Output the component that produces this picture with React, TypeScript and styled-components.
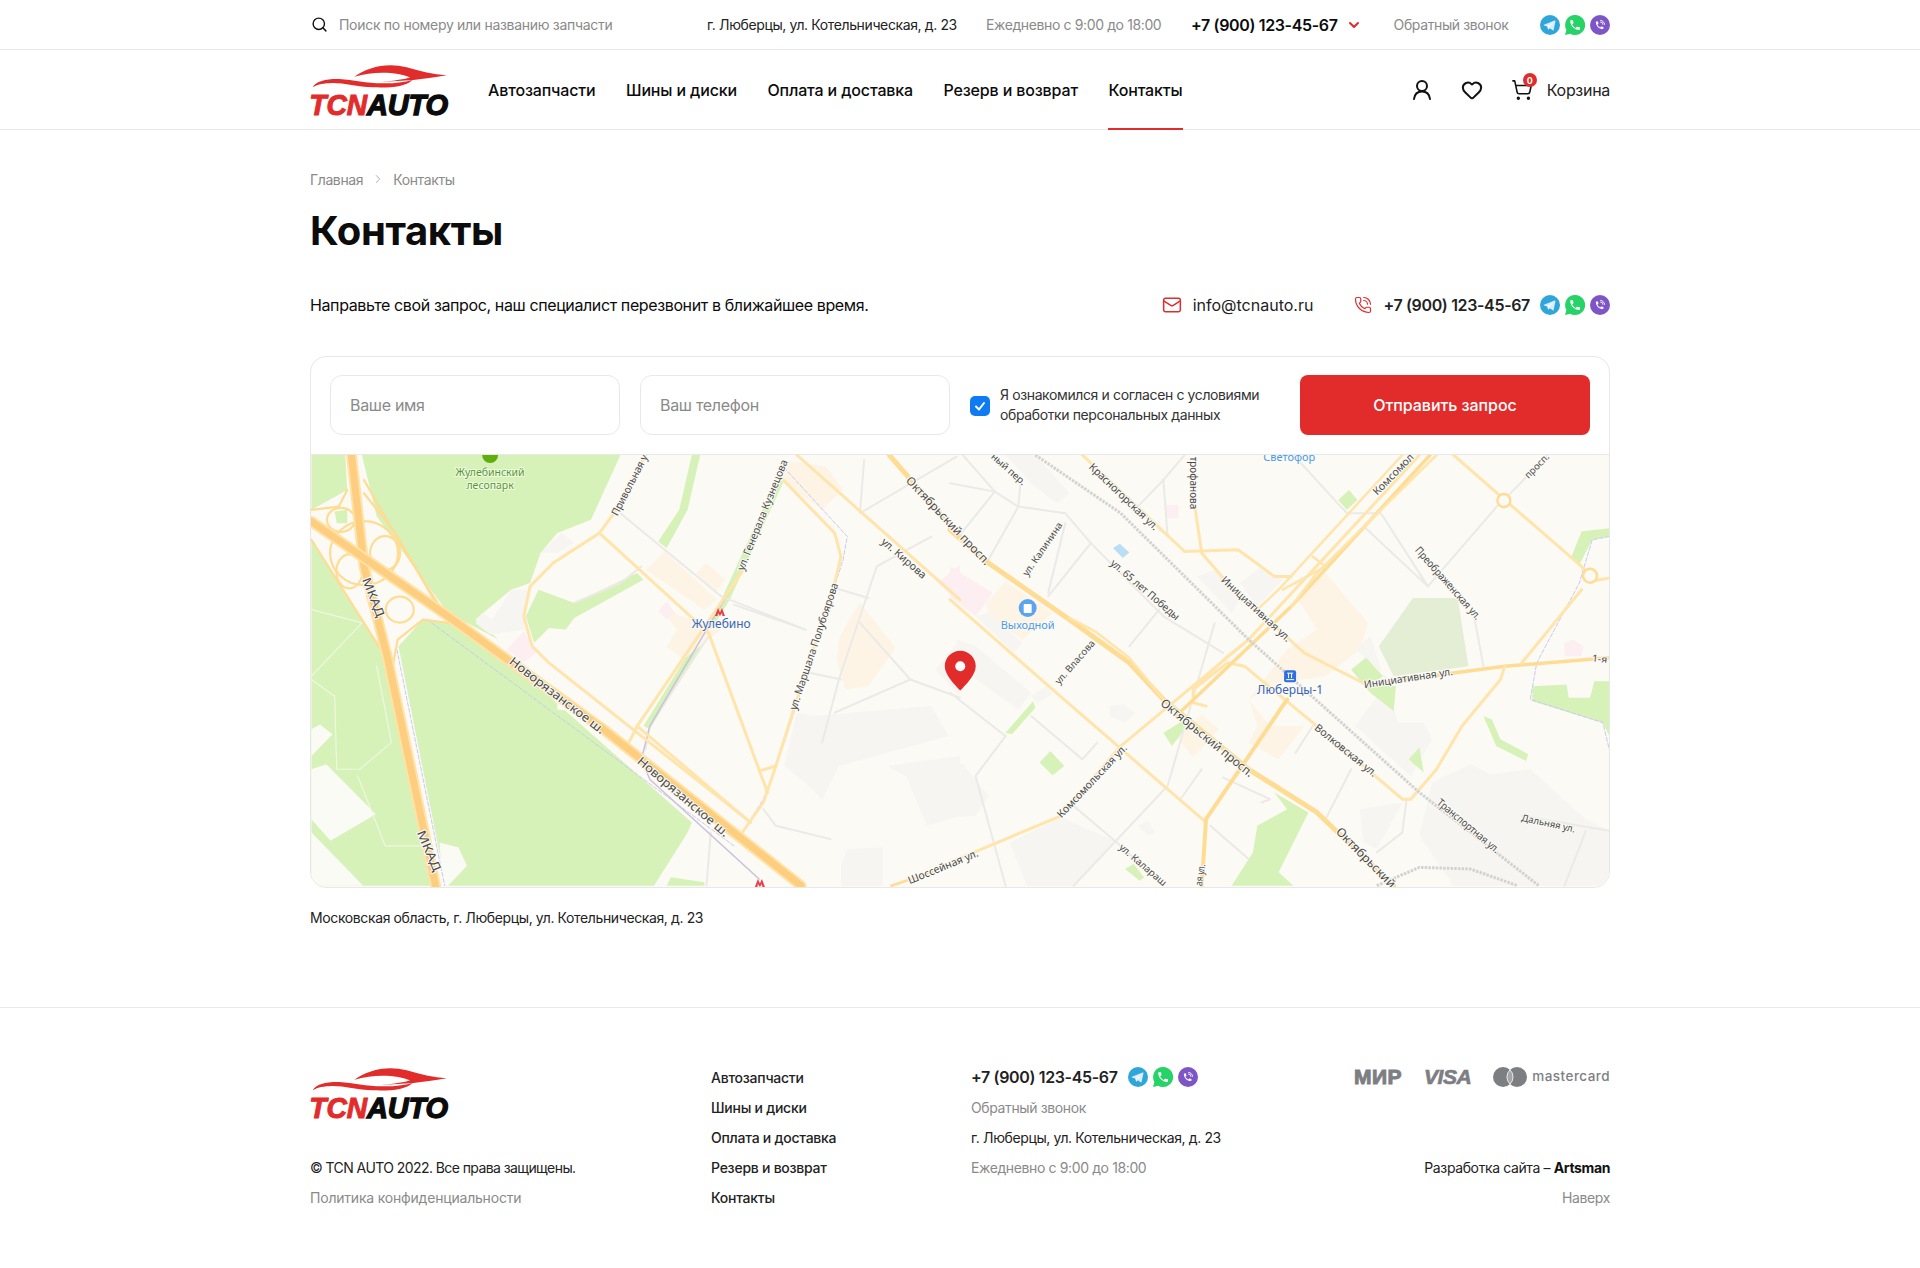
import React from 'react';
import styled, { createGlobalStyle } from 'styled-components';
import { Search, Heart, ShoppingCart, ChevronDown, ChevronRight, Mail, PhoneCall } from 'lucide-react';

const Global = createGlobalStyle`
  html, body { margin: 0; padding: 0; background: #fff; }
  body { font-family: Inter, "Noto Sans", sans-serif; color: #0c0c0c; letter-spacing: -0.38px; }
  * { box-sizing: border-box; }
`;

const Page = styled.div`width: 1920px; height: 1268px; overflow: hidden; display: flex; flex-direction: column;`;
const Container = styled.div`width: 1300px; margin: 0 auto;`;

const TopBarWrap = styled.div`height: 50px; border-bottom: 1px solid #e9e9e9;`;
const TopBarRow = styled(Container)`height: 49px; display: flex; align-items: center; font-size: 14px;`;
const SearchBox = styled.div`width: 397px; display: flex; align-items: center; gap: 11px; color: #8a8a8a; letter-spacing: -0.3px; svg { color: #111; margin-left: 1px; }`;
const Address = styled.span`width: 279px; color: #222;`;
const Hours = styled.span`width: 205px; color: #8a8a8a;`;
const Phone = styled.span`font-size: 16px; font-weight: 600; letter-spacing: -0.35px; white-space: nowrap;`;
const TopChevron = styled.span`display: flex; margin: 0 32px 0 8px; color: #e22c2c;`;
const Muted = styled.span`color: #8a8a8a;`;
const Messengers = styled.div`display: flex; gap: 5px; margin-left: auto;`;
const InlineMessengers = styled(Messengers)`margin-left: 0;`;

const HeaderWrap = styled.div`height: 80px; border-bottom: 1px solid #e9e9e9;`;
const HeaderRow = styled(Container)`height: 80px; display: flex; align-items: center;`;
const LogoSvg = styled.svg`display: block; width: 140px; height: 50px; overflow: visible; margin-left: -1px;`;
const Nav = styled.nav`display: flex; gap: 30.5px; margin-left: 39px; height: 80px;`;
const NavItem = styled.a<{ $active?: boolean }>`
  display: flex; align-items: center; font-size: 16px; font-weight: 500; height: 80px; color: #0c0c0c; letter-spacing: -0.15px;
  border-bottom: 2px solid ${p => (p.$active ? '#e22c2c' : 'transparent')};
  padding-top: 1px;
`;
const HeaderTools = styled.div`margin-left: auto; display: flex; align-items: center;`;
const ToolIcon = styled.span<{ $gap: number }>`display: flex; position: relative; margin-right: ${p => p.$gap}px;`;
const Badge = styled.span`
  position: absolute; top: -6px; right: -4px; width: 14px; height: 14px; border-radius: 50%;
  background: #e22c2c; color: #fff; font-size: 9px; font-weight: 700; letter-spacing: 0; display: flex; align-items: center; justify-content: center;
`;
const CartLabel = styled.span`font-size: 16px; color: #222; letter-spacing: -0.3px;`;

const Main = styled(Container)`flex: 1; display: flex; flex-direction: column;`;
const Crumbs = styled.div`display: flex; align-items: center; height: 20px; margin-top: 39px; font-size: 14px; color: #8a8a8a; gap: 8px; svg { color: #a8a8a8; }`;
const Title = styled.h1`margin: 18px 0 0; font-size: 40px; line-height: 48px; font-weight: 700; letter-spacing: -0.4px;`;
const IntroRow = styled.div`display: flex; align-items: center; height: 24px; margin-top: 38px; font-size: 16px;`;
const IntroText = styled.span`flex: 1;`;
const IconLine = styled.span`display: flex; align-items: center; gap: 11px; color: #222; svg { color: #e22c2c; }`;
const IntroMail = styled(IconLine)`margin-right: 41px; letter-spacing: 0;`;
const IntroPhone = styled(IconLine)`margin-right: 10px;`;

const Card = styled.section`margin-top: 39px; height: 532px; border: 1px solid #e8e8e8; border-radius: 16px; overflow: hidden; display: flex; flex-direction: column;`;
const FormRow = styled.form`height: 98px; flex: none; padding: 18px 19px; display: flex; align-items: stretch; border-bottom: 1px solid #e8e8e8;`;
const Field = styled.input<{ $w: number }>`
  width: ${p => p.$w}px; height: 60px; border: 1px solid #e8e8e8; border-radius: 12px; padding: 0 19px; margin-right: 20px;
  font: 400 16px Inter, sans-serif; letter-spacing: -0.3px; color: #222; outline: none; background: #fff;
  &::placeholder { color: #8a8a8a; opacity: 1; }
`;
const Agree = styled.label`width: 330px; display: flex; align-items: center; gap: 10px; font-size: 14px; line-height: 20px; color: #333; margin-top: -1px;`;
const CheckBox = styled.span`width: 20px; height: 20px; flex: none; border-radius: 5px; background: #0f7bf2; display: flex; align-items: center; justify-content: center; margin-top: 1px;`;
const Submit = styled.button`width: 290px; height: 60px; border: 0; border-radius: 8px; background: #e22c2c; color: #fff; font: 500 16px Inter, sans-serif; letter-spacing: -0.05px;`;
const MapSvg = styled.svg`display: block; width: 100%; flex: 1; background: #fbfaf5;`;
const MapAddress = styled.div`margin-top: 20px; height: 20px; line-height: 20px; font-size: 14px; color: #222;`;

const FooterWrap = styled.footer`margin-top: 79px; border-top: 1px solid #e9e9e9; padding-top: 54px; flex: 1;`;
const FooterGrid = styled(Container)`display: grid; grid-template-columns: 401px 260px 1fr auto; font-size: 14px;`;
const FooterCol = styled.div`display: flex; flex-direction: column;`;
const FooterLine = styled.div<{ $gray?: boolean; $strong?: boolean; $right?: boolean; $ls?: number }>`
  height: 30px; display: flex; align-items: center; gap: 10px;
  color: ${p => (p.$gray ? '#8a8a8a' : '#222')};
  font-weight: ${p => (p.$strong ? 500 : 400)};
  letter-spacing: ${p => (p.$ls !== undefined ? `${p.$ls}px` : p.$strong ? '-0.25px' : 'inherit')};
  justify-content: ${p => (p.$right ? 'flex-end' : 'flex-start')};
`;
const FooterLogo = styled.div`height: 90px; padding-top: 6px;`;
const Bold = styled.b`font-weight: 700; color: #111;`;
const Pay = styled.div`height: 90px; display: flex; align-items: flex-start; justify-content: flex-end; padding-top: 5px; color: #7d7e82;`;
const Mir = styled.span`font: 700 21px "Liberation Sans", sans-serif; letter-spacing: 0.4px; -webkit-text-stroke: 1px #7d7e82; margin-right: 22px; line-height: 20px;`;
const Visa = styled.span`font: italic 700 21px "Liberation Sans", sans-serif; margin-right: 22px; line-height: 20px; letter-spacing: -0.4px; -webkit-text-stroke: 0.7px #7d7e82;`;
const McWord = styled.span`font: 500 13.5px "Inter", sans-serif; line-height: 18px; margin-left: 5px; letter-spacing: 0.45px;`;

const WAPHONE = 'M6.6 10.8c1.4 2.8 3.8 5.1 6.6 6.6l2.2-2.2c.3-.3.7-.4 1-.2 1.1.4 2.3.6 3.6.6.6 0 1 .4 1 1V20c0 .6-.4 1-1 1C10.6 21 3 13.4 3 4c0-.6.4-1 1-1h3.5c.6 0 1 .4 1 1 0 1.3.2 2.5.6 3.6.1.3 0 .7-.2 1z';

const Telegram = () => (
  <svg width="20" height="20" viewBox="0 0 20 20"><circle cx="10" cy="10" r="10" fill="#2fa6da" />
    <path d="M4 9.8l10.6-4.2c.6-.2 1 .1.8.9l-1.8 8.4c-.1.6-.5.7-1 .4l-2.7-2-1.3 1.3c-.2.2-.4.2-.5-.1l-.9-3L4 10.5c-.5-.2-.5-.5 0-.7z" fill="#d9eef8" />
    <path d="M7.5 11.5l5.5-3.7-4.2 4.4-.3 2z" fill="#fff" /></svg>
);
const WhatsApp = () => (
  <svg width="20" height="20" viewBox="0 0 20 20"><path d="M10 0a10 10 0 0 0-8.6 15L0 20l5.2-1.3A10 10 0 1 0 10 0z" fill="#25d366" />
    <g transform="translate(3.6 3.6) scale(.54)"><path d={WAPHONE} fill="#fff" /></g></svg>
);
const Viber = () => (
  <svg width="20" height="20" viewBox="0 0 20 20"><circle cx="10" cy="10" r="10" fill="#7d55c7" />
    <g transform="translate(4.6 5.2) scale(.42)"><path d={WAPHONE} fill="#fff" /></g>
    <path d="M10.6 5.4a4 4 0 0 1 4 4M10.6 7a2.4 2.4 0 0 1 2.4 2.4" stroke="#fff" strokeWidth=".9" fill="none" strokeLinecap="round" /></svg>
);
const MessengerSet = () => (<Messengers><Telegram /><WhatsApp /><Viber /></Messengers>);

const Logo = () => (
  <LogoSvg viewBox="30 55 418 150">
    <path d="M165 90C205 62 262 46 322 62C362 74 402 84 442 86C405 92 372 97 342 100L245 106C285 102 318 98 332 92C300 78 232 70 165 90Z" fill="#e22c2c" />
    <path d="M40 122C50 103 82 96 120 97C162 100 200 110 250 110C295 110 322 105 340 99C322 120 270 124 222 122C172 120 132 108 96 109C76 110 56 112 40 122Z" fill="#e22c2c" />
    <text x="30" y="204" fontFamily="Liberation Sans" fontStyle="italic" fontWeight="700" fontSize="86" textLength="173" lengthAdjust="spacingAndGlyphs" fill="#e22c2c" stroke="#e22c2c" strokeWidth="3">TCN</text>
    <text x="203" y="204" fontFamily="Liberation Sans" fontStyle="italic" fontWeight="700" fontSize="86" textLength="243" lengthAdjust="spacingAndGlyphs" fill="#0b0b0b" stroke="#0b0b0b" strokeWidth="4">AUTO</text>
  </LogoSvg>
);

type P = [number, number];
const a = (x: number, y: number): P => [x / 2.376 - 10, y / 3 - 5];
const b = (x: number, y: number): P => [640 + x / 2.34, y / 3 - 5];
const pts = (f: (x: number, y: number) => P, s: string) =>
  s.trim().split(/\s+/).map(t => { const [x, y] = t.split(',').map(Number); return f(x, y).map(v => v.toFixed(1)).join(','); }).join(' ');

const GREEN = '#d6f2b8';
const LGREEN = '#e3eed5';
const ORANGE = '#fdf4e6';
const GRAY = '#f6f5f1';
const PINK = '#fdeef1';
const WHITE = '#fbfbf6';
const MAJOR = '#fdcd80';
const MID = '#ffdc94';
const MINOR = '#ffe5ac';
const THIN = '#eceae7';
const RAIL = '#d2d2d0';

const polysA: [string, string][] = [
  [GREEN, '145,15 760,15 690,210 610,250 570,310 545,400 500,420 415,510 470,570 350,490 180,200'],
  [GREEN, '25,15 105,15 110,120 25,180'],
  [GREEN, '25,270 150,520 210,640 320,1310 25,1310'],
  [GREEN, '232,590 290,510 350,520 500,640 930,1120 920,1150 840,1310 345,1310'],
  [GREEN, '565,420 650,460 800,370 815,390 650,505 630,540 590,535 555,580 535,500'],
  [GREEN, '930,15 950,15 920,180 870,295 850,275 900,180'],
  [GREEN, '1130,90 1150,90 1020,450 830,840 815,830 1000,450'],
  [GREEN, '870,1310 880,1285 960,1300 960,1310'],
  [WHITE, '25,840 45,825 75,855 25,920'],
  [WHITE, '25,960 60,945 178,1095 70,1175 25,1110'],
  [WHITE, '25,1150 148,1310 25,1310'],
  [WHITE, '330,1180 375,1195 395,1250 350,1310 335,1310'],
  [WHITE, '610,750 640,770 640,785 610,780'],
  [GREEN, '80,185 110,180 110,220 85,220'],
  [ORANGE, '820,360 865,305 990,450 960,480'],
  [ORANGE, '940,370 965,340 1010,390 985,430'],
  [ORANGE, '860,480 1000,540 910,630 870,590 895,540'],
  [ORANGE, '1300,520 1330,460 1415,595 1350,710 1295,720 1275,630 1280,570'],
  [ORANGE, '1145,30 1250,50 1290,120 1240,180 1140,90'],
  [PINK, '490,600 530,545 560,610 530,640'],
  [PINK, '850,485 870,455 890,490 870,510'],
  [PINK, '1515,400 1568,345 1568,460'],
  [GRAY, '415,520 430,490 455,510 500,420 540,420 530,540 450,555'],
  [GRAY, '570,310 620,250 650,280 610,310'],
  [GRAY, '1180,790 1220,800 1500,770 1540,860 1280,950 1240,1050 1200,1000 1150,950'],
  [GRAY, '1395,950 1568,920 1568,1100 1490,1130 1440,980'],
  [GRAY, '1285,1250 1300,1200 1385,1195 1385,1310 1285,1310'],
  [GRAY, '1510,660 1568,570 1568,740'],
];
const polysB: [string, string][] = [
  [GRAY, '130,15 200,15 280,130 250,160 190,100'],
  [PINK, '0,350 100,430 60,500 0,440'],
  [ORANGE, '85,460 130,395 240,490 170,570 90,500'],
  [GRAY, '60,500 90,490 170,580 150,610'],
  [GRAY, '15,570 60,590 190,730 160,780 40,670'],
  [GRAY, '375,770 405,765 435,790 410,820 375,800'],
  [GRAY, '190,740 225,710 240,735 205,760'],
  [GRAY, '0,940 30,945 90,1040 60,1100 0,1105'],
  [GRAY, '140,1180 260,1105 385,1175 290,1310 180,1310'],
  [GRAY, '440,1130 465,1115 480,1150 465,1160'],
  [GRAY, '580,380 620,360 680,450 660,490'],
  [GRAY, '680,400 730,350 780,390 720,470'],
  [ORANGE, '810,440 880,370 980,520 960,600 880,680 770,700 700,750 750,830 830,830 770,930 700,880 720,830 700,750 790,600 860,540'],
  [ORANGE, '530,860 590,795 630,840 570,925'],
  [GRAY, '950,600 985,560 1050,820 1110,820 1130,870 1080,980 950,830 1030,690'],
  [LGREEN, '1005,590 1085,445 1190,445 1215,650 1040,680'],
  [GREEN, '940,660 975,625 1015,680 985,705 1045,710 1040,785 985,730'],
  [GREEN, '500,850 545,815 550,840 520,890'],
  [GREEN, '910,150 935,120 955,150 930,180'],
  [GREEN, '130,850 195,755 200,775 145,855'],
  [GREEN, '210,940 235,905 268,950 240,978'],
  [GREEN, '1075,930 1100,895 1110,970'],
  [GREEN, '1250,800 1270,810 1290,870 1355,915 1350,935 1280,890'],
  [GREEN, '1365,710 1445,705 1450,745 1500,745 1510,695 1545,695 1545,860 1530,820 1365,755'],
  [GREEN, '1455,325 1480,245 1545,235 1545,260 1505,270 1475,345'],
  [GREEN, '660,1310 710,1210 720,1130 790,1080 760,1030 840,1090 770,1270 805,1310'],
  [GREEN, '410,1260 430,1245 455,1285 445,1295'],
  [GRAY, '1130,1000 1220,945 1265,975 1360,960 1490,1110 1545,1145 1545,1310 1180,1310 1100,1160'],
  [GRAY, '1000,1200 1060,1060 960,1080 970,1180'],
  [PINK, '505,165 535,165 535,205 510,205'],
  [PINK, '1440,580 1460,570 1485,590 1480,620 1440,620'],
  ['#b9def5', '382,295 398,282 420,308 405,325'],
];
const roadsA: [string, number, string][] = [
  [THIN, 2, '760,190 1000,440 1200,540'],
  [THIN, 2, '1030,465 1200,540'],
  [THIN, 2, '650,460 760,400 810,350'],
  [THIN, 2, '1340,30 1330,190 1560,20'],
  [THIN, 2, '1500,260 1370,350 1280,690 1240,880'],
  [THIN, 2, '1270,415 1350,445'],
  [THIN, 2, '1210,670 1285,690'],
  [THIN, 2, '1330,520 1450,690 1270,790'],
  [THIN, 2, '1450,690 1568,745'],
  [THIN, 2, '970,560 830,830 820,900'],
  [THIN, 2, '1100,1080 1130,1130 1260,1170'],
  [THIN, 2, '975,1150 965,1310'],
  ['#eef7e0', 1.2, '25,480 145,520 25,680'],
  ['#eef7e0', 1.2, '25,690 80,740 85,960 140,960 215,880 180,650'],
  ['#eef7e0', 1.2, '135,980 200,1190 290,1190'],
  ['#cbc0de', 1.5, '1040,380 830,830 810,930 830,990 1090,1290'],
  [MINOR, 3, '820,15 745,190 710,250 600,340 545,410 530,500 550,590 590,640 1070,1120'],
  [MINOR, 3, '715,255 970,550 1110,1030'],
  [MINOR, 3, '1050,365 800,830 780,880'],
  [MINOR, 3, '800,830 1060,1110'],
  [MINOR, 3, '1140,80 1270,250 1285,320 1270,400 1170,790 1130,950 1100,1060 1050,1150'],
  [MINOR, 3, '1090,965 1130,950'],
  [MINOR, 3, '1180,15 1568,450'],
  [MID, 5, '1400,15 1568,260'],
  [MID, 2.5, '1405,1310 1568,1240'],
  [MID, 2.2, '150,90 240,290 340,490'],
  [MID, 2.2, '150,130 225,250 330,480'],
  [MID, 2.2, '25,180 90,170 110,120'],
  [MID, 2.2, '25,270 140,500 190,600'],
  [MID, 2.2, '220,640 230,570 290,510 350,520'],
  ['#ffe2a6', 11, '120,15 150,350 205,620 320,1310'],
  [MAJOR, 7, '120,15 150,350 205,620 320,1310'],
  ['#ffe2a6', 11, '25,215 350,500 720,840 1190,1310'],
  [MAJOR, 7, '25,215 350,500 720,840 1190,1310'],
];
const roadsB: [string, number, string][] = [
  [THIN, 2, '0,100 105,125 160,170 270,190 330,280 500,500 640,610'],
  [THIN, 2, '30,15 105,125 20,260'],
  [THIN, 2, '165,100 160,170 90,330'],
  [THIN, 2, '270,220 230,430'],
  [THIN, 2, '330,280 230,440'],
  [THIN, 2, '490,480 420,590'],
  [THIN, 2, '500,90 440,170 500,250'],
  [THIN, 2, '0,730 130,860 60,980 130,1310'],
  [THIN, 2, '190,800 310,930 345,880'],
  [THIN, 2, '290,1070 400,1190 500,1310'],
  [THIN, 2, '620,520 510,1010 290,1310'],
  [THIN, 2, '610,1130 700,1230'],
  [THIN, 2, '590,960 540,1050'],
  [THIN, 2, '640,985 750,1050 730,1060'],
  [THIN, 2, '850,830 810,910'],
  [THIN, 2, '940,960 880,1110'],
  [THIN, 2, '1070,1050 1060,1150 1000,1210'],
  [THIN, 2, '805,15 930,190 1010,190 1120,410'],
  [THIN, 2, '970,230 1120,410 1285,165'],
  [THIN, 2, '1230,510 1250,650'],
  [THIN, 2, '1310,135 1400,15'],
  [THIN, 2, '1490,1145 1440,1310'],
  [THIN, 2, '1340,1100 1545,1145'],
  [THIN, 2, '550,15 500,90 510,260'],
  [MID, 5, '0,240 90,340 280,510 420,640 500,750 700,960 860,1090 1040,1310'],
  [MINOR, 2.5, '280,505 340,545 420,625 500,750'],
  [MINOR, 3, '0,450 240,720 600,1120'],
  [MINOR, 3, '310,15 550,305 675,300 760,380 800,380'],
  [MINOR, 3, '575,180 590,310 650,400 830,610 975,705'],
  [MID, 3.5, '975,705 1300,650 1545,625'],
  [MINOR, 3, '1300,650 1290,690 1200,830 1140,960 1080,1050 1060,1050 860,830 690,650 650,640 570,720 570,760 600,770'],
  [MID, 4, '790,750 600,1110 590,1310'],
  [MINOR, 3, '1180,15 1300,150 1480,350 1500,380'],
  [MINOR, 3, '1480,420 1340,640'],
  [MINOR, 3, '1500,395 1545,385'],
  [MINOR, 3, '1100,15 700,570 400,890 260,1100 0,1240'],
  [MID, 3.5, '1125,15 800,470 530,800'],
  [MINOR, 2.5, '1140,15 860,370 800,470'],
  [MINOR, 2.5, '1060,15 770,420 720,480'],
  [MINOR, 2.5, '850,320 880,350 780,420'],
  [MINOR, 2.5, '570,720 650,620 700,570'],
  [RAIL, 3, '200,15 400,190 700,570 1100,1030 1380,1310'],
  [RAIL, 3, '1000,1310 1100,1255 1220,1260 1330,1310'],
];

const Label: React.FC<{ t: string; p: P; q: P; size?: number; fill?: string }> = ({ t, p, q, size = 10.5, fill = '#4a4a4a' }) => {
  const len = Math.hypot(q[0] - p[0], q[1] - p[1]);
  const ang = (Math.atan2(q[1] - p[1], q[0] - p[0]) * 180) / Math.PI;
  return (
    <text x={0} y={0} transform={`translate(${p[0]} ${p[1]}) rotate(${ang}) translate(0 ${size * 0.36})`} fontFamily="Noto Sans, Liberation Sans, sans-serif" fontSize={size}
      fill={fill} stroke="#fbfaf5" strokeWidth="2" paintOrder="stroke" textLength={len} lengthAdjust="spacingAndGlyphs" letterSpacing="0">{t}</text>
  );
};
const Center: React.FC<{ t: string; p: P; size?: number; fill: string }> = ({ t, p, size = 11.5, fill }) => (
  <text x={p[0]} y={p[1] + size * 0.36} textAnchor="middle" fontFamily="Noto Sans, Liberation Sans, sans-serif" fontSize={size} fill={fill} stroke="#fbfaf5" strokeWidth="1.5" paintOrder="stroke" letterSpacing="0">{t}</text>
);
const MetroMark: React.FC<{ p: P }> = ({ p }) => (
  <path transform={`translate(${p[0] - 5} ${p[1] - 4})`} d="M0 8L3 0L5 4.5L7 0L10 8H7.5L7 5L5 8L3 5L2.5 8Z" fill="#ef3a47" />
);

const MapDrawing = () => {
  const pin = b(24, 653);
  const shop = b(182, 475);
  const rail = b(797, 680);
  const park = a(450, 15);
  const c1 = b(1298, 152);
  const c2 = b(1500, 378);
  return (
    <MapSvg viewBox="0 0 1300 433" preserveAspectRatio="none">
      {polysA.map(([c, s], i) => <polygon key={'pa' + i} fill={c} points={pts(a, s)} />)}
      {polysB.map(([c, s], i) => <polygon key={'pb' + i} fill={c} points={pts(b, s)} />)}
      <g fill="none" strokeLinejoin="round" strokeLinecap="round">
        <polyline stroke="#c9c9f0" strokeWidth="1" strokeDasharray="4 2" points={pts(a, '228,600 342,1310')} />
        <polyline stroke="#c9c9f0" strokeWidth="1" strokeDasharray="4 2" points={pts(a, '300,510 1030,1190')} />
        <polyline stroke="#c9c9f0" strokeWidth="1" strokeDasharray="4 2" points={pts(a, '1140,40 1300,260 1290,330 1150,880 1100,1050 1040,1170')} />
        <polyline stroke="#c9c9f0" strokeWidth="1" strokeDasharray="4 2" points={pts(b, '1545,260 1505,270 1475,400 1375,640 1360,750 1530,820 1545,900')} />
        <g stroke={MID} strokeWidth="2.2">
          <ellipse cx={a(150, 310)[0]} cy={a(150, 310)[1]} rx={34} ry={32} />
          <ellipse cx={a(95, 210)[0]} cy={a(95, 210)[1]} rx={14} ry={12} />
          <ellipse cx={a(200, 310)[0]} cy={a(200, 310)[1]} rx={15} ry={17} />
          <ellipse cx={a(115, 365)[0]} cy={a(115, 365)[1]} rx={13} ry={17} />
          <ellipse cx={a(235, 480)[0]} cy={a(235, 480)[1]} rx={14} ry={13} />
        </g>
        {roadsA.map(([c, w, s], i) => <polyline key={'ra' + i} stroke={c} strokeWidth={w} points={pts(a, s)} />)}
        {roadsB.map(([c, w, s], i) => <polyline key={'rb' + i} stroke={c} strokeWidth={w} points={pts(b, s)} strokeDasharray={c === RAIL ? '2.5 1.2' : undefined} strokeLinecap={c === RAIL ? 'butt' : undefined} />)}
        <circle cx={c1[0]} cy={c1[1]} r="6.5" stroke={MID} strokeWidth="2.5" fill="#fbfaf5" />
        <circle cx={c2[0]} cy={c2[1]} r="7" stroke={MID} strokeWidth="2.5" fill="#fbfaf5" />
      </g>

      <circle cx={park[0]} cy={park[1]} r="8" fill="#5fae0e" />
      <Center t="Жулебинский" p={a(450, 66)} size={10.5} fill="#4f9a1e" />
      <Center t="лесопарк" p={a(450, 105)} size={10.5} fill="#4f9a1e" />
      <Label t="Привольная у" p={a(745, 195)} q={a(818, 15)} />
      <Label t="ул. Генерала Кузнецова" p={a(1045, 360)} q={a(1150, 30)} />
      <Label t="ул. Маршала Полубоярова" p={a(1170, 780)} q={a(1270, 400)} />
      <Label t="Октябрьский просп." p={a(1445, 85)} q={b(90, 340)} size={11.5} />
      <Label t="ул. Кирова" p={a(1385, 270)} q={a(1485, 380)} />
      <Label t="МКАД" p={a(155, 385)} q={a(190, 500)} size={12} />
      <Label t="МКАД" p={a(285, 1145)} q={a(325, 1265)} size={12} />
      <Label t="Новорязанское ш." p={a(500, 630)} q={a(720, 845)} size={12} />
      <Label t="Новорязанское ш." p={a(805, 930)} q={a(1015, 1155)} size={12} />
      <MetroMark p={a(997, 487)} />
      <MetroMark p={a(1092, 1302)} />
      <Center t="Жулебино" p={a(1000, 522)} size={12} fill="#3a64b8" />
      <Label t="Шоссейная ул." p={a(1445, 1295)} q={b(65, 1210)} />
      <Label t="ный пер." p={b(100, 15)} q={b(175, 100)} size={9.5} />
      <Label t="Красногорская ул." p={b(330, 45)} q={b(485, 235)} />
      <Label t="трофанова" p={b(572, 20)} q={b(572, 178)} />
      <Center t="Светофор" p={b(795, 22)} size={11} fill="#4b9be8" />
      <Label t="Комсомол" p={b(995, 130)} q={b(1082, 15)} />
      <Label t="просп." p={b(1350, 80)} q={b(1400, 15)} size={9.5} />
      <Label t="ул. Калинина" p={b(175, 375)} q={b(258, 220)} size={9.5} />
      <Label t="ул. 65 лет Победы" p={b(380, 335)} q={b(535, 505)} />
      <Label t="Инициативная ул." p={b(640, 385)} q={b(795, 570)} />
      <Label t="Преображенская ул." p={b(1095, 295)} q={b(1240, 505)} />
      <circle cx={shop[0]} cy={shop[1]} r="9" fill="#5aa5ee" />
      <rect x={shop[0] - 4} y={shop[1] - 4} width="8" height="9" rx="1" fill="#fff" />
      <Center t="Выходной" p={b(182, 525)} size={11} fill="#4b9be8" />
      <Label t="ул. Власова" p={b(250, 700)} q={b(335, 575)} size={9.5} />
      <Label t="Октябрьский просп." p={b(498, 755)} q={b(708, 975)} size={12} />
      <Label t="Инициативная ул." p={b(970, 705)} q={b(1178, 665)} />
      <Label t="1-я" p={b(1505, 625)} q={b(1540, 630)} size={9.5} />
      <rect x={rail[0] - 6} y={rail[1] - 6} width="12" height="12" rx="2" fill="#2f6fe0" />
      <path d={`M${rail[0] - 3} ${rail[1] - 3}h6M${rail[0] - 1.5} ${rail[1] - 3}v5M${rail[0] + 1.5} ${rail[1] - 3}v5M${rail[0] - 4} ${rail[1] + 3.5}h8`} stroke="#fff" fill="none" strokeWidth="1" />
      <Center t="Люберцы-1" p={b(797, 722)} size={12} fill="#3a64b8" />
      <Label t="Волковская ул." p={b(858, 830)} q={b(998, 975)} />
      <Label t="Комсомольская ул." p={b(255, 1100)} q={b(410, 890)} />
      <Label t="Транспортная ул." p={b(1145, 1055)} q={b(1285, 1205)} />
      <Label t="Дальняя ул." p={b(1340, 1105)} q={b(1465, 1140)} size={9.5} />
      <Label t="ул. Каларaш" p={b(400, 1190)} q={b(505, 1305)} size={9.5} />
      <Label t="Октябрьский" p={b(910, 1140)} q={b(1040, 1310)} size={12} />
      <Label t="ая ул." p={b(582, 1310)} q={b(590, 1245)} size={10} />

      <g transform={`translate(${pin[0]} ${pin[1]})`}>
        <path d="M0 -16.5C-8.500 -16.5 -15.5 -9.500 -15.5 -1C-15.5 8 -5 18 0 23.500C5 18 15.500 8 15.500 -1C15.500 -9.500 8.500 -16.5 0 -16.5Z" fill="#e22c2c" />
        <circle cx="0" cy="-1" r="5" fill="#fff" />
      </g>
    </MapSvg>
  );
};

const Check = () => (
  <svg width="12" height="12" viewBox="0 0 12 12"><path d="M2 6.500L5 9.500L10 3" fill="none" stroke="#fff" strokeWidth="2" strokeLinecap="round" strokeLinejoin="round" /></svg>
);
const UserIcon = () => (
  <svg width="20" height="22" viewBox="0 0 20 22" fill="none" stroke="#111" strokeWidth="2" strokeLinecap="round"><circle cx="10" cy="7" r="5" /><path d="M2 20c.6-4.800 3.800-7.500 8-7.500s7.400 2.700 8 7.500" /></svg>
);

export default function App() {
  return (
    <Page>
      <Global />
      <TopBarWrap>
        <TopBarRow>
          <SearchBox><Search size={17} strokeWidth={2} />Поиск по номеру или названию запчасти</SearchBox>
          <Address>г. Люберцы, ул. Котельническая, д. 23</Address>
          <Hours>Ежедневно с 9:00 до 18:00</Hours>
          <Phone>+7 (900) 123-45-67</Phone>
          <TopChevron><ChevronDown size={16} strokeWidth={3} /></TopChevron>
          <Muted>Обратный звонок</Muted>
          <MessengerSet />
        </TopBarRow>
      </TopBarWrap>
      <HeaderWrap>
        <HeaderRow>
          <Logo />
          <Nav>
            <NavItem>Автозапчасти</NavItem>
            <NavItem>Шины и диски</NavItem>
            <NavItem>Оплата и доставка</NavItem>
            <NavItem>Резерв и возврат</NavItem>
            <NavItem $active>Контакты</NavItem>
          </Nav>
          <HeaderTools>
            <ToolIcon $gap={29}><UserIcon /></ToolIcon>
            <ToolIcon $gap={28}><Heart size={22} strokeWidth={2.2} color="#111" /></ToolIcon>
            <ToolIcon $gap={14}><ShoppingCart size={22} strokeWidth={1.7} color="#111" /><Badge>0</Badge></ToolIcon>
            <CartLabel>Корзина</CartLabel>
          </HeaderTools>
        </HeaderRow>
      </HeaderWrap>
      <Main>
        <Crumbs>Главная<ChevronRight size={14} strokeWidth={1.6} />Контакты</Crumbs>
        <Title>Контакты</Title>
        <IntroRow>
          <IntroText>Направьте свой запрос, наш специалист перезвонит в ближайшее время.</IntroText>
          <IntroMail><Mail size={20} strokeWidth={1.8} />info@tcnauto.ru</IntroMail>
          <IntroPhone><PhoneCall size={18} strokeWidth={1.6} /><Phone>+7 (900) 123-45-67</Phone></IntroPhone>
          <MessengerSet />
        </IntroRow>
        <Card>
          <FormRow>
            <Field $w={290} placeholder="Ваше имя" />
            <Field $w={310} placeholder="Ваш телефон" />
            <Agree>
              <CheckBox><Check /></CheckBox>
              <span>Я ознакомился и согласен с условиями обработки персональных данных</span>
            </Agree>
            <Submit type="button">Отправить запрос</Submit>
          </FormRow>
          <MapDrawing />
        </Card>
        <MapAddress>Московская область, г. Люберцы, ул. Котельническая, д. 23</MapAddress>
      </Main>
      <FooterWrap>
        <FooterGrid>
          <FooterCol>
            <FooterLogo><Logo /></FooterLogo>
            <FooterLine $ls={-0.58}>© TCN AUTO 2022. Все права защищены.</FooterLine>
            <FooterLine $gray $ls={-0.2}>Политика конфиденциальности</FooterLine>
          </FooterCol>
          <FooterCol>
            <FooterLine $strong>Автозапчасти</FooterLine>
            <FooterLine $strong>Шины и диски</FooterLine>
            <FooterLine $strong>Оплата и доставка</FooterLine>
            <FooterLine $strong>Резерв и возврат</FooterLine>
            <FooterLine $strong>Контакты</FooterLine>
          </FooterCol>
          <FooterCol>
            <FooterLine><Phone>+7 (900) 123-45-67</Phone><InlineMessengers><Telegram /><WhatsApp /><Viber /></InlineMessengers></FooterLine>
            <FooterLine $gray>Обратный звонок</FooterLine>
            <FooterLine>г. Люберцы, ул. Котельническая, д. 23</FooterLine>
            <FooterLine $gray>Ежедневно с 9:00 до 18:00</FooterLine>
          </FooterCol>
          <FooterCol>
            <Pay>
              <Mir>МИР</Mir>
              <Visa>VISA</Visa>
              <svg width="34" height="20" viewBox="0 0 34 20"><circle cx="10" cy="10" r="10" fill="#7d7e82" /><circle cx="24" cy="10" r="10" fill="#7d7e82" /><path d="M17 2.800a10 10 0 0 1 0 14.400a10 10 0 0 1 0-14.400z" fill="#a5a6a9" stroke="#fff" strokeWidth=".8" /></svg>
              <McWord>mastercard</McWord>
            </Pay>
            <FooterLine $right><span>Разработка сайта – <Bold>Artsman</Bold></span></FooterLine>
            <FooterLine $right $gray>Наверх</FooterLine>
          </FooterCol>
        </FooterGrid>
      </FooterWrap>
    </Page>
  );
}
